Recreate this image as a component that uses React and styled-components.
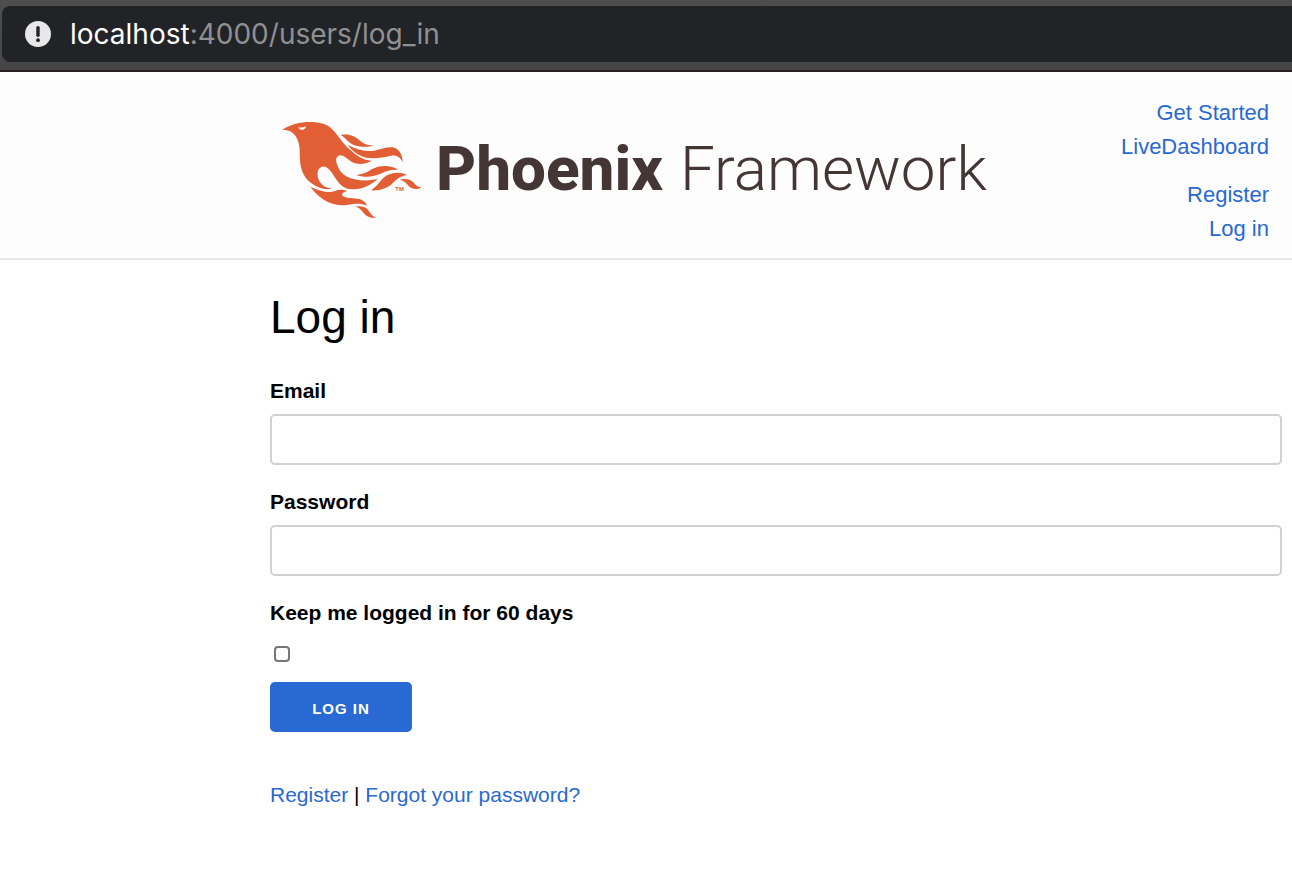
import React from "react";
import styled, { createGlobalStyle } from "styled-components";

const GlobalStyle = createGlobalStyle`
  *, *::before, *::after { box-sizing: border-box; }
  body {
    margin: 0;
    background: #fff;
    color: #000;
    font-family: "Liberation Sans", Arial, sans-serif;
    font-size: 22px;
    line-height: 34px;
  }
`;

const BrowserBar = styled.div`
  padding: 6px 0 8px 2px;
  background: linear-gradient(#4e4e4e, #464646);
  border-bottom: 2px solid #262024;
`;

const AddressField = styled.div`
  display: flex;
  align-items: center;
  gap: 19px;
  height: 56px;
  padding-left: 23px;
  border-radius: 8px 0 0 8px;
  background: #222327;
`;

const Address = styled.span`
  color: #8f9092;
  font-family: Inter, sans-serif;
  font-size: 28px;
  white-space: nowrap;
`;

const Host = styled.span`
  color: #fff;
`;

const Header = styled.header`
  display: flex;
  justify-content: space-between;
  padding: 24px 23px 12px 270px;
  border-bottom: 2px solid #e6e6e6;
  background: #fdfdfd;
`;

const Logo = styled.a`
  display: flex;
  align-items: center;
  gap: 6px;
  padding-bottom: 2px;
  color: #433634;
  text-decoration: none;
`;

const Wordmark = styled.span`
  display: flex;
  gap: 17px;
  padding-bottom: 3px;
  font-family: Roboto, sans-serif;
  font-size: 62px;
  line-height: 72px;
`;

const WordPart = styled.span`
  font-weight: ${(p) => p.$weight};
`;

const Nav = styled.nav`
  display: flex;
  flex-direction: column;
  gap: 14px;
  text-align: right;
`;

const NavList = styled.ul`
  margin: 0;
  padding: 0;
  list-style: none;
`;

const Link = styled.a`
  color: #2969d3;
  text-decoration: none;
`;

const Main = styled.main`
  padding: 29px 10px 40px 270px;
`;

const Title = styled.h1`
  margin: 0 0 29px;
  font-size: 46px;
  font-weight: 400;
  line-height: 56px;
`;

const Form = styled.form`
  display: flex;
  flex-direction: column;
  align-items: flex-start;
`;

const Label = styled.label`
  margin-bottom: 6px;
  font-size: 21px;
  font-weight: 700;
`;

const TextInput = styled.input`
  width: 100%;
  height: 51px;
  margin-bottom: 20px;
  padding: 0 16px;
  border: 2px solid #d1d1d1;
  border-radius: 5px;
  background: transparent;
  font: inherit;
`;

const Checkbox = styled.input`
  appearance: none;
  width: 16px;
  height: 16px;
  margin: 10px 4px 20px;
  border: 2px solid #767676;
  border-radius: 4px;
  background: #fff;
  &:checked { background: #2969d3; }
`;

const SubmitButton = styled.button`
  width: 142px;
  height: 50px;
  margin: 0 0 46px;
  padding: 3px 0 0;
  border: 0;
  border-radius: 5px;
  background: #2969d3;
  color: #fff;
  font: 700 15px "Liberation Sans", Arial, sans-serif;
  letter-spacing: 1px;
  text-transform: uppercase;
`;

const Footnote = styled.p`
  margin: 0;
  font-size: 21px;
`;

function WarningIcon() {
  return (
    <svg width="26" height="26" viewBox="0 0 26 26" aria-hidden="true">
      <circle cx="13" cy="13" r="13" fill="#e8e8e8" />
      <path d="M13 6.6v7.6" stroke="#222327" strokeWidth="3.4" strokeLinecap="round" />
      <circle cx="13" cy="19.2" r="1.9" fill="#222327" />
    </svg>
  );
}

function PhoenixBird() {
  return (
    <svg width="160" height="120" viewBox="0 0 480 360" fill="#e25f36" aria-hidden="true">
      <path d="M37 59 C62 43 90 36 120 36 C150 36 172 42 188 59 C208 80 218 100 239 118 C256 134 276 151 305 152 C285 163 262 165 246 156 C232 148 224 137 211 136 C199 137 195 149 202 166 C208 182 217 194 233 201 C259 213 292 214 323 207 C306 222 281 238 249 238 C216 238 205 217 192 198 C181 182 172 168 157 170 C141 173 139 195 148 213 C156 227 170 235 188 236 C157 243 120 223 105 200 C89 176 90 151 89 121 C88 86 72 58 37 59Z" />
      <path fill="#fdfdfd" d="M85 52 C93 54 101 52 108 49 C107 61 90 64 85 52Z" />
      <path d="M212 75 C235 70 255 78 270 92 C284 104 298 108 313 105 C295 113 270 112 250 104 C234 98 226 82 212 75Z" />
      <path d="M233 104 C260 119 290 126 312 122 C335 117 350 110 368 112 C388 116 398 135 398 157 C390 140 378 135 363 137 C340 142 315 147 290 143 C265 138 245 121 233 104Z" />
      <path d="M258 194 C275 195 290 188 305 178 C330 163 365 165 386 180 C368 178 350 182 335 190 C310 202 280 204 258 194Z" />
      <path d="M302 241 C320 232 328 215 342 202 C360 187 390 184 411 195 C390 198 380 208 368 220 C352 236 330 243 302 241Z" />
      <path d="M389 211 C400 204 420 205 430 217 C438 227 446 233 456 233 C440 240 425 239 414 226 C407 217 400 211 389 211Z" />
      <path d="M121 230 C150 243 175 250 195 243 C207 238 220 238 232 244 C222 245 216 250 216 256 C225 266 245 264 262 266 C277 268 288 276 291 287 C275 280 255 280 235 284 C205 290 175 280 155 265 C140 253 130 243 121 230Z" />
      <path d="M255 289 C275 288 288 290 296 302 C303 313 310 320 318 324 C302 325 290 320 280 308 C272 298 265 292 255 289Z" />
      <text x="376" y="243" fontFamily="Liberation Sans, sans-serif" fontSize="18" fontWeight="700">TM</text>
    </svg>
  );
}

export default function App() {
  return (
    <>
      <GlobalStyle />
      <BrowserBar>
        <AddressField>
          <WarningIcon />
          <Address>
            <Host>localhost</Host>:4000/users/log_in
          </Address>
        </AddressField>
      </BrowserBar>
      <Header>
        <Logo href="#">
          <PhoenixBird />
          <Wordmark>
            <WordPart $weight={800}>Phoenix</WordPart>
            <WordPart $weight={300}>Framework</WordPart>
          </Wordmark>
        </Logo>
        <Nav>
          <NavList>
            <li><Link href="#">Get Started</Link></li>
            <li><Link href="#">LiveDashboard</Link></li>
          </NavList>
          <NavList>
            <li><Link href="#">Register</Link></li>
            <li><Link href="#">Log in</Link></li>
          </NavList>
        </Nav>
      </Header>
      <Main>
        <Title>Log in</Title>
        <Form onSubmit={(e) => e.preventDefault()}>
          <Label htmlFor="email">Email</Label>
          <TextInput id="email" type="email" />
          <Label htmlFor="password">Password</Label>
          <TextInput id="password" type="password" />
          <Label htmlFor="remember">Keep me logged in for 60 days</Label>
          <Checkbox id="remember" type="checkbox" />
          <SubmitButton type="submit">Log in</SubmitButton>
        </Form>
        <Footnote>
          <Link href="#">Register</Link> | <Link href="#">Forgot your password?</Link>
        </Footnote>
      </Main>
    </>
  );
}
